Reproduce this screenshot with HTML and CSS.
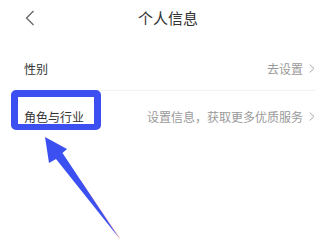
FILE: index.html
```
<!DOCTYPE html>
<html lang="zh-CN">
<head>
<meta charset="utf-8">
<title>个人信息</title>
<link rel="stylesheet" href="styles.css">
</head>
<body>
<div class="page">
  <header class="header">
    <div class="back">
      <svg width="10" height="16" viewBox="0 0 10 16"><path d="M8.5 1 L1.5 8 L8.5 15" fill="none" stroke="#666" stroke-width="1.3"/></svg>
    </div>
    <div class="title">个人信息</div>
    <div></div>
  </header>
  <div class="list">
    <div class="row row-first">
      <span class="label">性别</span>
      <span class="value">去设置<svg class="chev" width="6" height="9" viewBox="0 0 6 9"><path d="M0.7 0.5 L5 4.5 L0.7 8.5" fill="none" stroke="#a8a8a8" stroke-width="1"/></svg></span>
    </div>
    <div class="row row-second">
      <span class="label">角色与行业</span>
      <span class="value">设置信息，获取更多优质服务<svg class="chev" width="6" height="9" viewBox="0 0 6 9"><path d="M0.7 0.5 L5 4.5 L0.7 8.5" fill="none" stroke="#a8a8a8" stroke-width="1"/></svg></span>
    </div>
  </div>
  <div class="highlight"></div>
  <svg class="arrow" width="336" height="245" viewBox="0 0 336 245">
    <path d="M80 180 L119.6 238.2" stroke="#ff4a3a" stroke-width="0.6" stroke-opacity="0.7" fill="none"/>
    <polygon points="45,137 67,149 62.5,153 119,238 56,159 49,163" fill="#3c50f2"/>
  </svg>
</div>
</body>
</html>
```
FILE: styles.css
```
* { box-sizing: border-box; }
html, body { margin: 0; padding: 0; background: #fff; }
body { font-family: "Noto Sans CJK SC", "Noto Sans", sans-serif; }
.page { position: relative; width: 336px; height: 245px; overflow: hidden; }
.header {
  height: 36px;
  display: grid;
  grid-template-columns: 1fr auto 1fr;
  align-items: center;
}
.back { padding-left: 25px; display: flex; align-items: center; }
.back svg { display: block; }
.title { font-size: 15px; color: #333; line-height: 20px; }
.list { padding: 10px 21px 0 24px; }
.row {
  display: flex;
  justify-content: space-between;
  align-items: center;
  font-size: 12px;
  line-height: 17px;
}
.row-first { height: 45px; border-bottom: 1px solid #f2f2f2; }
.row-second { height: 50px; }
.label { color: #333; }
.value { color: #9a9a9a; display: flex; align-items: center; gap: 6px; }
.chev { display: block; }
.highlight {
  position: absolute;
  left: 11px;
  top: 90px;
  width: 90px;
  height: 40px;
  border: 7px solid #3c50f2;
  border-bottom-width: 6px;
  border-radius: 5px;
}
.arrow { position: absolute; left: 0; top: 0; }
```
